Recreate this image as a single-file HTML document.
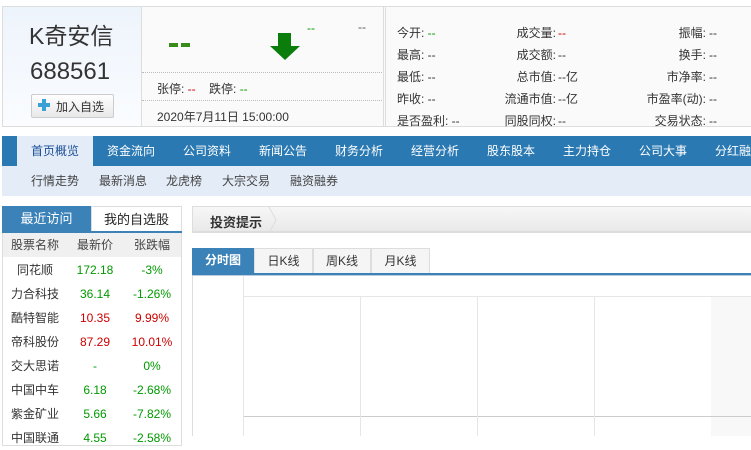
<!DOCTYPE html>
<html><head><meta charset="utf-8"><style>
*{margin:0;padding:0;box-sizing:border-box}
body{width:751px;height:434px;overflow:hidden;background:#fff;font-family:"Liberation Sans","Noto Sans CJK SC",sans-serif;font-size:12px;color:#333;position:relative}
.a{position:absolute;white-space:nowrap}
.g{color:#090}.r{color:#c00}
.lab{position:absolute;text-align:right;white-space:nowrap}
.val{position:absolute;white-space:nowrap}
</style></head><body>
<div class="a" style="left:2px;top:6px;width:760px;height:121px;border:1px solid #ddd;background:#fafafa"></div>
<div class="a" style="left:3px;top:7px;width:139px;height:119px;background:linear-gradient(#eef4fc,#fafcff);border-right:1px solid #ddd"></div>
<div class="a" style="left:29px;top:17px;font-size:23px;color:#333">K奇安信</div>
<div class="a" style="left:30px;top:58px;font-size:24px;color:#333">688561</div>
<div class="a" style="left:31px;top:94px;width:83px;height:24px;border:1px solid #ccc;background:linear-gradient(#fff,#e8e8e8);border-radius:2px"></div>
<div class="a" style="left:38px;top:103px;width:12px;height:4px;background:#3aa0d8"></div>
<div class="a" style="left:42px;top:99px;width:4px;height:12px;background:#3aa0d8"></div>
<div class="a" style="left:56px;top:98px;font-size:12px;color:#333">加入自选</div>
<div class="a" style="left:142px;top:72px;width:242px;border-top:1px dotted #bbb"></div>
<div class="a" style="left:142px;top:100px;width:242px;border-top:1px dotted #bbb"></div>
<div class="a" style="left:169px;top:43px;width:9px;height:4px;background:#3a8c1a"></div>
<div class="a" style="left:181px;top:43px;width:9px;height:4px;background:#3a8c1a"></div>
<svg class="a" style="left:270px;top:33px" width="30" height="28"><path d="M8 0H21V13H30L15 27L0 13H8Z" fill="#0a7d0a"/></svg>
<div class="a g" style="left:307px;top:21px;font-size:12px">--</div>
<div class="a" style="left:358px;top:20px;font-size:12px;color:#555">--</div>
<div class="a" style="left:157px;top:80px">张停: <span class="r">--</span>&nbsp;&nbsp;&nbsp;&nbsp;跌停: <span class="g">--</span></div>
<div class="a" style="left:157px;top:108px">2020年7月11日 15:00:00</div>
<div class="a" style="left:383px;top:7px;width:3px;height:119px;border-left:1px solid #ddd;border-right:1px solid #ddd"></div>
<div class="a" style="left:397px;top:22px;line-height:22px">今开: <span class="g">--</span><br>最高: --<br>最低: --<br>昨收: --<br>是否盈利: --</div>
<div class="lab" style="left:456px;top:22px;width:100px;line-height:22px">成交量:<br>成交额:<br>总市值:<br>流通市值:<br>同股同权:</div>
<div class="val" style="left:558px;top:22px;line-height:22px"><span class="r">--</span><br>--<br>--亿<br>--亿<br>--</div>
<div class="lab" style="left:606px;top:22px;width:100px;line-height:22px">振幅:<br>换手:<br>市净率:<br>市盈率(动):<br>交易状态:</div>
<div class="val" style="left:709px;top:22px;line-height:22px">--<br>--<br>--<br>--<br>--</div>
<div class="a" style="left:2px;top:136px;width:749px;height:30px;background:#2a79b3"></div>
<div class="a" style="left:17px;top:136px;width:76px;height:30px;background:#e4ecf8"></div>
<div class="a" style="left:0;top:136px;font-size:12px;line-height:30px;color:#fff">
<span class="a" style="left:31px;color:#1a4f96">首页概览</span><span class="a" style="left:107px">资金流向</span><span class="a" style="left:183px">公司资料</span><span class="a" style="left:259px">新闻公告</span><span class="a" style="left:335px">财务分析</span><span class="a" style="left:411px">经营分析</span><span class="a" style="left:487px">股东股本</span><span class="a" style="left:563px">主力持仓</span><span class="a" style="left:639px">公司大事</span><span class="a" style="left:715px">分红融资</span></div>
<div class="a" style="left:2px;top:166px;width:749px;height:30px;background:#e4ecf8"></div>
<div class="a" style="left:0;top:166px;line-height:30px;color:#444">
<span class="a" style="left:31px">行情走势</span><span class="a" style="left:99px">最新消息</span><span class="a" style="left:166px">龙虎榜</span><span class="a" style="left:222px">大宗交易</span><span class="a" style="left:290px">融资融券</span></div>
<div class="a" style="left:2px;top:206px;width:180px;height:240px;border:1px solid #ddd;border-top:none"></div>
<div class="a" style="left:2px;top:206px;width:89px;height:26px;background:#3b82b8;color:#fff;text-align:center;line-height:26px;font-size:13px">最近访问</div>
<div class="a" style="left:91px;top:206px;width:91px;height:26px;border:1px solid #ddd;border-bottom:none;text-align:center;line-height:26px;font-size:13px;color:#222">我的自选股</div>
<div class="a" style="left:2px;top:231px;width:180px;height:2px;background:#3b82b8"></div>
<div class="a" style="left:3px;top:233px;width:178px;height:24px;background:#f0f0f0"></div>
<div class="a" style="left:0;top:233px;line-height:24px;font-size:12px">
<div style="display:flex;position:absolute;left:3px;width:178px;text-align:center;color:#444"><span style="width:64px">股票名称</span><span style="width:56px">最新价</span><span style="width:58px">张跌幅</span></div>
</div>
<div class="a" style="left:3px;top:258px;width:178px;line-height:24px;font-size:12px">
<div style="display:flex;text-align:center"><span style="width:64px">同花顺</span><span style="width:56px" class="g">172.18</span><span style="width:58px" class="g">-3%</span></div>
<div style="display:flex;text-align:center"><span style="width:64px">力合科技</span><span style="width:56px" class="g">36.14</span><span style="width:58px" class="g">-1.26%</span></div>
<div style="display:flex;text-align:center"><span style="width:64px">酷特智能</span><span style="width:56px" class="r">10.35</span><span style="width:58px" class="r">9.99%</span></div>
<div style="display:flex;text-align:center"><span style="width:64px">帝科股份</span><span style="width:56px" class="r">87.29</span><span style="width:58px" class="r">10.01%</span></div>
<div style="display:flex;text-align:center"><span style="width:64px">交大思诺</span><span style="width:56px" class="g">-</span><span style="width:58px" class="g">0%</span></div>
<div style="display:flex;text-align:center"><span style="width:64px">中国中车</span><span style="width:56px" class="g">6.18</span><span style="width:58px" class="g">-2.68%</span></div>
<div style="display:flex;text-align:center"><span style="width:64px">紫金矿业</span><span style="width:56px" class="g">5.66</span><span style="width:58px" class="g">-7.82%</span></div>
<div style="display:flex;text-align:center"><span style="width:64px">中国联通</span><span style="width:56px" class="g">4.55</span><span style="width:58px" class="g">-2.58%</span></div>
</div>
<div class="a" style="left:192px;top:206px;width:570px;height:27px;border:1px solid #ddd;border-bottom:2px solid #ddd;background:linear-gradient(#f7f7f7,#e9e9e9)"></div>
<div class="a" style="left:210px;top:212px;font-weight:bold;font-size:13px;color:#333">投资提示</div>
<svg class="a" style="left:268px;top:207px" width="10" height="26"><path d="M1 0L8 13L1 26" fill="none" stroke="#ddd"/></svg>
<div class="a" style="left:192px;top:248px;width:62px;height:25px;background:#3b82b8;color:#fff;text-align:center;line-height:25px;font-size:12px;font-weight:bold">分时图</div>
<div class="a" style="left:254px;top:248px;width:59px;height:25px;border:1px solid #ddd;border-bottom:none;background:#f5f5f5;text-align:center;line-height:24px">日K线</div>
<div class="a" style="left:313px;top:248px;width:58px;height:25px;border:1px solid #ddd;border-bottom:none;background:#f5f5f5;text-align:center;line-height:24px">周K线</div>
<div class="a" style="left:371px;top:248px;width:59px;height:25px;border:1px solid #ddd;border-bottom:none;background:#f5f5f5;text-align:center;line-height:24px">月K线</div>
<div class="a" style="left:192px;top:273px;width:560px;height:3px;background:#3b82b8;border-bottom:1px solid #bcd"></div>
<div class="a" style="left:192px;top:276px;width:1px;height:160px;background:#ddd"></div>
<div class="a" style="left:711px;top:296px;width:40px;height:140px;background:#f8f8f8"></div>
<div class="a" style="left:243px;top:296px;width:508px;height:1px;background:#e6e6e6"></div>
<div class="a" style="left:243px;top:416px;width:508px;height:1px;background:#ccc"></div>
<div class="a" style="left:243px;top:276px;width:1px;height:160px;background:#e6e6e6"></div>
<div class="a" style="left:360px;top:296px;width:1px;height:140px;background:#e6e6e6"></div>
<div class="a" style="left:477px;top:296px;width:1px;height:140px;background:#e6e6e6"></div>
<div class="a" style="left:594px;top:296px;width:1px;height:140px;background:#e6e6e6"></div>
</body></html>
